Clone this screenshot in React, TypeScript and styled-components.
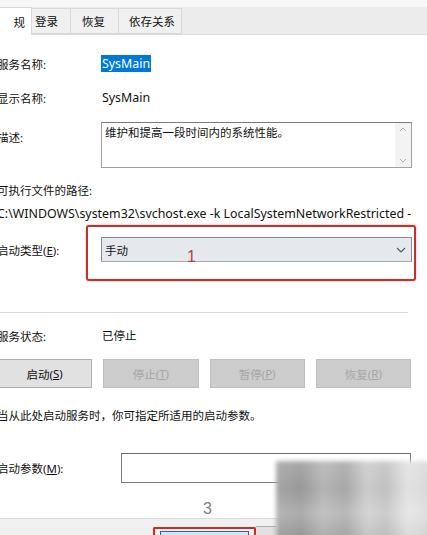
import React from "react"
import styled, { createGlobalStyle } from "styled-components"

const GlobalStyle = createGlobalStyle`
  html, body {
    margin: 0;
    padding: 0;
    background: #ffffff;
    overflow: hidden;
  }
  body {
    font-family: "Noto Sans", "Noto Sans CJK SC", sans-serif;
    font-size: 11.5px;
    color: #111;
  }
`

const Window = styled.div`
  position: relative;
  width: 427px;
  height: 535px;
  overflow: hidden;
  background: #fff;
  display: flex;
  flex-direction: column;
`

const TabStrip = styled.div`
  height: 35px;
  flex-shrink: 0;
  display: flex;
  align-items: flex-end;
  background: linear-gradient(#f7f7f7 0, #f7f7f7 7px, #ececec 7px);
  border-bottom: 1px solid #d9d9d9;
  box-sizing: border-box;
`

const Tab = styled.div<{ $active?: boolean; $w: number; $pl?: number }>`
  width: ${(p) => p.$w}px;
  height: ${(p) => (p.$active ? 28 : 26)}px;
  margin-bottom: ${(p) => (p.$active ? -1 : 0)}px;
  box-sizing: border-box;
  display: flex;
  align-items: center;
  justify-content: ${(p) => (p.$active ? "flex-end" : "flex-start")};
  padding-left: ${(p) => p.$pl ?? 0}px;
  padding-right: ${(p) => (p.$active ? 6 : 0)}px;
  background: ${(p) => (p.$active ? "#fff" : "#f0f0f0")};
  border: 1px solid #d9d9d9;
  border-bottom: ${(p) => (p.$active ? "none" : "1px solid #d9d9d9")};
  border-left: ${(p) => (p.$active ? "none" : "1px solid #d9d9d9")};
  margin-right: -1px;
`

const Content = styled.div`
  margin-left: -3px;
  padding-top: 20px;
  display: flex;
  flex-direction: column;
`

const Row = styled.div<{ $h: number; $col?: number; $top?: boolean }>`
  display: grid;
  grid-template-columns: ${(p) => p.$col ?? 104}px 1fr;
  align-items: ${(p) => (p.$top ? "start" : "center")};
  height: ${(p) => p.$h}px;
  position: relative;
`

const Label = styled.span<{ $pt?: number }>`
  white-space: nowrap;
  padding-top: ${(p) => p.$pt ?? 0}px;
`

const Value = styled.span<{ $selected?: boolean }>`
  justify-self: start;
  padding: 0 1px;
  line-height: 17px;
  background: ${(p) => (p.$selected ? "#0078d7" : "transparent")};
  color: ${(p) => (p.$selected ? "#fff" : "#111")};
`

// latin runs are set a touch larger so they keep the dialog font's width
const Latin = styled.span`
  font-size: 12.4px;
`

const TextArea = styled.div`
  width: 311px;
  height: 46px;
  box-sizing: border-box;
  border: 1px solid #a0a0a0;
  border-top-color: #7a7a7a;
  display: flex;
`

const TextBody = styled.div`
  flex: 1;
  padding: 1px 3px;
  line-height: 17px;
`

const ScrollBar = styled.div`
  width: 16px;
  background: #f3f3f3;
  display: flex;
  flex-direction: column;
  justify-content: space-between;
  align-items: center;
  padding: 4px 0;
`

const PlainLine = styled.div<{ $h: number }>`
  height: ${(p) => p.$h}px;
  display: flex;
  align-items: center;
  white-space: nowrap;
`

// read-only path field: clipped at its own width
const PathField = styled(PlainLine)`
  width: 414px;
  overflow: hidden;
`

const SelectWrap = styled.div`
  position: relative;
  width: 311px;
`

const Select = styled.div`
  height: 25px;
  box-sizing: border-box;
  border: 1px solid #8c8c8c;
  border-bottom-color: #a8a8a8;
  background: #e5e9ee;
  display: flex;
  align-items: center;
  justify-content: space-between;
  padding: 0 5px 0 3px;
`

const RedFrame = styled.div`
  position: absolute;
  left: -15px;
  top: -12px;
  width: 330px;
  height: 56px;
  box-sizing: border-box;
  border: 2px solid #c4302b;
  border-radius: 3px;
  box-shadow: 0 0 2px rgba(196, 48, 43, 0.5);
  pointer-events: none;
`

const Mark = styled.span<{ $color: string }>`
  position: absolute;
  font-family: "Liberation Sans", sans-serif;
  font-size: 16px;
  color: ${(p) => p.$color};
`

const Divider = styled.div`
  height: 1px;
  width: 411px;
  background: #d8d8d8;
`

const ButtonRow = styled.div`
  display: grid;
  grid-template-columns: repeat(4, 1fr);
  column-gap: 11px;
  width: 414px;
  height: 29px;
`

const Button = styled.div<{ $disabled?: boolean }>`
  box-sizing: border-box;
  border: 1px solid ${(p) => (p.$disabled ? "#bfbfbf" : "#adadad")};
  background: ${(p) => (p.$disabled ? "#cccccc" : "#e1e1e1")};
  color: ${(p) => (p.$disabled ? "#a6a6a6" : "#111")};
  display: flex;
  align-items: center;
  justify-content: center;
`

const Key = styled.span`
  text-decoration: underline;
`

const Input = styled.div`
  width: 290px;
  height: 30px;
  box-sizing: border-box;
  border: 1px solid #7a7a7a;
  border-top-color: #6e6e6e;
  background: #fff;
`

const Footer = styled.div`
  margin-top: auto;
  height: 16px;
  background: #f0f0f0;
  border-top: 1px solid #dcdcdc;
  position: relative;
  display: flex;
  align-items: flex-end;
  padding-left: 153px;
`

const OkFrame = styled.div`
  width: 103px;
  height: 8px;
  box-sizing: border-box;
  border: 2px solid #d02a24;
  border-bottom: none;
  border-radius: 2px 2px 0 0;
  padding: 2px 5px 0;
  display: flex;
`

const OkButton = styled.div`
  flex: 1;
  border: 1px solid #2f5fa8;
  border-bottom: none;
  background: #cde8f8;
`

const NextButton = styled.div`
  width: 20px;
  height: 8px;
  border-top: 1px solid #adadad;
  background: #e1e1e1;
`

const Smudge = styled.div`
  position: absolute;
  right: -6px;
  bottom: -6px;
  width: 157px;
  height: 80px;
  background:
    linear-gradient(180deg, rgba(255,255,255,0.15), rgba(255,255,255,0) 35%, rgba(255,255,255,0.2) 65%, rgba(0,0,0,0.04)),
    linear-gradient(90deg, #a4a4a4 0%, #989898 16%, #b4b4b4 30%, #a6a6a6 44%, #cbcbcb 58%, #c0c0c0 70%, #e2e2e2 84%, #d6d6d6 100%);
  filter: blur(2px);
`

const Chevron = () => (
  <svg width="10" height="6" viewBox="0 0 10 6">
    <path d="M1 1 L5 5 L9 1" fill="none" stroke="#555" strokeWidth="1.1" />
  </svg>
)

const Arrow = ({ up }: { up?: boolean }) => (
  <svg width="8" height="5" viewBox="0 0 8 5">
    <path d={up ? "M1 4 L4 1 L7 4" : "M1 1 L4 4 L7 1"} fill="none" stroke="#b0b0b0" strokeWidth="1" />
  </svg>
)

export default function App() {
  return (
    <>
      <GlobalStyle />
      <Window>
        <TabStrip>
          <Tab $active $w={32}>规</Tab>
          <Tab $w={40} $pl={3}>登录</Tab>
          <Tab $w={49} $pl={11}>恢复</Tab>
          <Tab $w={64} $pl={10}>依存关系</Tab>
        </TabStrip>
        <Content>
          <Row $h={17}>
            <Label>服务名称:</Label>
            <Value $selected><Latin>SysMain</Latin></Value>
          </Row>
          <Row $h={17} style={{ marginTop: 17 }}>
            <Label>显示名称:</Label>
            <Value><Latin>SysMain</Latin></Value>
          </Row>
          <Row $h={46} $top style={{ marginTop: 16 }}>
            <Label $pt={7}>描述:</Label>
            <TextArea>
              <TextBody>维护和提高一段时间内的系统性能。</TextBody>
              <ScrollBar>
                <Arrow up />
                <Arrow />
              </ScrollBar>
            </TextArea>
          </Row>
          <PlainLine $h={17} style={{ marginTop: 13 }}>可执行文件的路径:</PlainLine>
          <PathField $h={17} style={{ marginTop: 7 }}>
            <Latin>C:\WINDOWS\system32\svchost.exe -k LocalSystemNetworkRestricted -p</Latin>
          </PathField>
          <Row $h={25} style={{ marginTop: 15 }}>
            <Label>启动类型(<Key>E</Key>):</Label>
            <SelectWrap>
              <Select>
                <span>手动</span>
                <Chevron />
              </Select>
              <RedFrame />
              <Mark $color="#b8413c" style={{ left: 86, top: 11 }}>1</Mark>
            </SelectWrap>
          </Row>
          <div style={{ height: 50 }} />
          <Divider />
          <Row $h={17} style={{ marginTop: 14 }}>
            <Label>服务状态:</Label>
            <Value>已停止</Value>
          </Row>
          <ButtonRow style={{ marginTop: 15 }}>
            <Button>启动(<Key>S</Key>)</Button>
            <Button $disabled>停止(<Key>T</Key>)</Button>
            <Button $disabled>暂停(<Key>P</Key>)</Button>
            <Button $disabled>恢复(<Key>R</Key>)</Button>
          </ButtonRow>
          <PlainLine $h={17} style={{ marginTop: 18 }}>
            当从此处启动服务时，你可指定所适用的启动参数。
          </PlainLine>
          <Row $h={30} $col={124} style={{ marginTop: 30 }}>
            <Label>启动参数(<Key>M</Key>):</Label>
            <Input />
          </Row>
        </Content>
        <Footer>
          <Mark $color="#808080" style={{ left: 203, top: -19 }}>3</Mark>
          <OkFrame>
            <OkButton />
          </OkFrame>
          <NextButton />
        </Footer>
        <Smudge />
      </Window>
    </>
  )
}
